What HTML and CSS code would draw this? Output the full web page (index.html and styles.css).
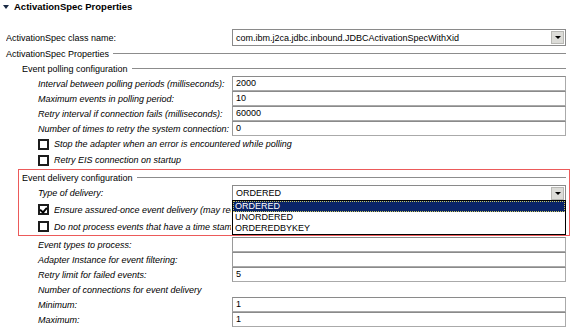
FILE: index.html
```html
<!DOCTYPE html>
<html lang="en">

<head>
    <meta charset="UTF-8">
    <title>ActivationSpec Properties</title>
    <link rel="stylesheet" href="styles.css">
</head>

<body>
    <div class="page">
        <div class="title">
            <span class="twisty"></span>
            <span>ActivationSpec Properties</span>
        </div>

        <div class="row row-combo top">
            <label class="label lvl0">ActivationSpec class name:</label>
            <div class="combo">
                <span class="combo-text">com.ibm.j2ca.jdbc.inbound.JDBCActivationSpecWithXid</span>
                <span class="combo-btn"></span>
            </div>
        </div>

        <div class="row group lvl0">
            <span>ActivationSpec Properties</span>
            <span class="rule"></span>
        </div>

        <div class="row group lvl1">
            <span>Event polling configuration</span>
            <span class="rule"></span>
        </div>

        <div class="row">
            <label class="label lvl2 em">Interval between polling periods (milliseconds):</label>
            <div class="field">2000</div>
        </div>
        <div class="row">
            <label class="label lvl2 em">Maximum events in polling period:</label>
            <div class="field">10</div>
        </div>
        <div class="row">
            <label class="label lvl2 em">Retry interval if connection fails (milliseconds):</label>
            <div class="field">60000</div>
        </div>
        <div class="row">
            <label class="label lvl2 em">Number of times to retry the system connection:</label>
            <div class="field">0</div>
        </div>
        <div class="row row-check">
            <span class="check lvl2"></span>
            <span class="em">Stop the adapter when an error is encountered while polling</span>
        </div>
        <div class="row row-check">
            <span class="check lvl2"></span>
            <span class="em">Retry EIS connection on startup</span>
        </div>

        <div class="highlight">
            <div class="row group">
                <span>Event delivery configuration</span>
                <span class="rule"></span>
            </div>
            <div class="row row-combo">
                <label class="label lvl2 em">Type of delivery:</label>
                <div class="combo">
                    <span class="combo-text">ORDERED</span>
                    <span class="combo-btn"></span>
                    <ul class="menu">
                        <li class="selected">ORDERED</li>
                        <li>UNORDERED</li>
                        <li>ORDEREDBYKEY</li>
                    </ul>
                </div>
            </div>
            <div class="row row-check tall">
                <span class="check checked lvl2"></span>
                <span class="em clip">Ensure assured-once event delivery (may reduce performance)</span>
            </div>
            <div class="row row-check tall">
                <span class="check lvl2"></span>
                <span class="em clip">Do not process events that have a time stamp in the future</span>
            </div>
        </div>

        <div class="row">
            <label class="label lvl2 em">Event types to process:</label>
            <div class="field"></div>
        </div>
        <div class="row">
            <label class="label lvl2 em">Adapter Instance for event filtering:</label>
            <div class="field"></div>
        </div>
        <div class="row">
            <label class="label lvl2 em">Retry limit for failed events:</label>
            <div class="field">5</div>
        </div>
        <div class="row">
            <label class="label lvl2 em">Number of connections for event delivery</label>
        </div>
        <div class="row">
            <label class="label lvl2 em">Minimum:</label>
            <div class="field">1</div>
        </div>
        <div class="row">
            <label class="label lvl2 em">Maximum:</label>
            <div class="field">1</div>
        </div>
    </div>
</body>

</html>
```

FILE: styles.css
```css
* {
    margin: 0;
    padding: 0;
    box-sizing: border-box;
}

body {
    background: #fff;
    color: #000;
    font-family: "Liberation Sans", Arial, sans-serif;
    font-size: 9px;
    overflow: hidden;
}

.page {
    padding: 0 6px 0 6px;
    width: 572px;
}

.em {
    font-style: italic;
}

/* header */
.title {
    display: flex;
    align-items: center;
    height: 13px;
    font-weight: bold;
    font-size: 9.5px;
}

.twisty {
    width: 0;
    height: 0;
    margin: 0 5px 0 -3px;
    border-left: 3px solid transparent;
    border-right: 3px solid transparent;
    border-top: 4px solid #1a2a44;
}

/* rows */
.row {
    display: flex;
    align-items: center;
    height: 15px;
    white-space: nowrap;
}

.row.top {
    margin-top: 16px;
}

.row-combo {
    height: 17px;
}

.row-check {
    height: 16px;
}

.row-check.tall {
    height: 17px;
}

.label {
    flex: none;
    width: 226px;
    overflow: hidden;
}

.lvl1 {
    padding-left: 16px;
}

.lvl2 {
    margin-left: 32px;
}

.label.lvl2 {
    margin-left: 0;
    padding-left: 32px;
}

.group {
    gap: 4px;
}

.rule {
    flex: 1;
    height: 1px;
    background: #8c8c8c;
}

/* inputs */
.field {
    flex: 1;
    height: 15px;
    padding: 0 3px;
    line-height: 13px;
    border: 1px solid #aaa;
    border-top-color: #8a8a8a;
    border-left-color: #9a9a9a;
    background: #fff;
}

.combo {
    position: relative;
    flex: 1;
    display: flex;
    align-items: center;
    height: 17px;
    padding: 0 1px 0 3px;
    border: 1px solid #8a8a8a;
    background: #fff;
}

.combo-text {
    flex: 1;
}

.combo-btn {
    position: relative;
    width: 13px;
    height: 13px;
    background: #dcdcd8;
    border: 1px solid #b8b8b4;
}

.combo-btn::after {
    content: "";
    position: absolute;
    left: 3px;
    top: 4px;
    border-left: 3px solid transparent;
    border-right: 3px solid transparent;
    border-top: 3px solid #000;
}

.menu {
    position: absolute;
    left: -1px;
    right: -1px;
    top: 14px;
    list-style: none;
    background: #fff;
    border: 1px solid #000;
    z-index: 2;
}

.menu li {
    height: 11px;
    line-height: 11px;
    padding-left: 2px;
}

.menu li.selected {
    background: #0a2468;
    color: #fff;
    outline: 1px dotted #c8c860;
    outline-offset: -1px;
}

/* checkboxes */
.check {
    flex: none;
    position: relative;
    width: 11px;
    height: 11px;
    margin-right: 5px;
    border: 2px solid #1c1c1c;
    background: #fff;
}

.check.checked::after {
    content: "";
    position: absolute;
    left: 1px;
    top: 0;
    width: 3px;
    height: 5px;
    border-right: 2px solid #000;
    border-bottom: 2px solid #000;
    transform: rotate(40deg);
}

/* text hidden under the open list */
.clip {
    width: 177px;
    overflow: hidden;
}

/* red marking around the delivery group */
.highlight {
    margin: 1px -4px 1px 12px;
    padding: 0 3px 0 3px;
    border: 1px solid #ec5a5a;
}

.highlight .row-combo {
    height: 16px;
}

.highlight .combo {
    height: 16px;
}

.highlight .lvl2 {
    margin-left: 16px;
}

.highlight .label.lvl2 {
    margin-left: 0;
    padding-left: 16px;
    width: 210px;
}
```
